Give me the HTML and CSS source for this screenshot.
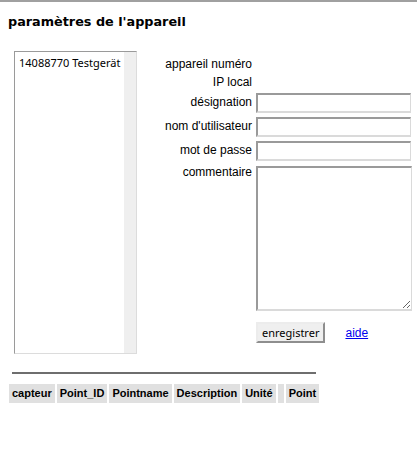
FILE: index.html
```html
<!DOCTYPE html>
<html lang="fr">
<head>
<meta charset="utf-8">
<title>paramètres de l'appareil</title>
<link rel="stylesheet" href="styles.css">
</head>
<body>
<div class="topline"></div>
<h1 class="title">paramètres de l'appareil</h1>
<div class="main">
  <div class="devices">
    <div class="device-list">
      <div class="device">14088770 Testgerät</div>
    </div>
    <div class="scrolltrack"></div>
  </div>
  <form class="settings">
    <label class="lbl lbl-text">appareil numéro</label><span class="val"></span>
    <label class="lbl lbl-text">IP local</label><span class="val"></span>
    <label class="lbl lbl-field" for="designation">désignation</label><input class="field" id="designation" type="text">
    <label class="lbl lbl-field" for="user">nom d'utilisateur</label><input class="field" id="user" type="text">
    <label class="lbl lbl-field" for="pass">mot de passe</label><input class="field" id="pass" type="password">
    <label class="lbl lbl-area" for="comment">commentaire</label><textarea class="area" id="comment"></textarea>
    <span></span>
    <div class="actions">
      <button type="button" class="btn">enregistrer</button>
      <a href="#" class="help">aide</a>
    </div>
  </form>
</div>
<div class="sep"></div>
<div class="points-head">
  <span class="th">capteur</span>
  <span class="th">Point_ID</span>
  <span class="th">Pointname</span>
  <span class="th">Description</span>
  <span class="th">Unité</span>
  <span class="th"></span>
  <span class="th">Point</span>
</div>
</body>
</html>
```
FILE: styles.css
```css
html, body {
  margin: 0;
  background: #fff;
}
body {
  font-family: "Liberation Sans", Arial, sans-serif;
  font-size: 12px;
  color: #000;
}
.topline {
  height: 2px;
  background: #a0a0a0;
}
.title {
  margin: 0;
  padding: 12px 8px 0;
  font-family: "DejaVu Sans", sans-serif;
  font-weight: bold;
  font-size: 12.8px;
  line-height: 15px;
}
.main {
  display: flex;
  align-items: flex-start;
  margin-top: 22px;
  padding-left: 14px;
}
.devices {
  width: 123px;
  height: 303px;
  box-sizing: border-box;
  border: 1px solid;
  border-color: #9a9a9a #dcdcdc #dcdcdc #9a9a9a;
  display: flex;
}
.device-list {
  flex: 1;
  padding: 3px 4px;
  font-family: "Noto Sans", "Open Sans", sans-serif;
  font-size: 11px;
  line-height: 15px;
  white-space: nowrap;
  overflow: hidden;
}
.scrolltrack {
  width: 12px;
  background: #efefef;
}
.settings {
  margin: 6px 0 0 23px;
  display: grid;
  grid-template-columns: 92px 156px;
  column-gap: 4px;
  row-gap: 4px;
}
.lbl {
  text-align: right;
  line-height: 14px;
  white-space: nowrap;
}
.lbl-field {
  padding-top: 2px;
}
.field {
  box-sizing: border-box;
  width: 155px;
  height: 20px;
  margin: 0;
  padding: 1px 2px;
  border-style: solid;
  border-width: 2px 1px 2px 2px;
  border-color: #9a9a9a #dadada #dadada #9a9a9a;
  background: #fff;
  font-family: "Liberation Sans", Arial, sans-serif;
  font-size: 12px;
  outline: none;
}
.area {
  box-sizing: border-box;
  width: 156px;
  height: 145px;
  margin: 1px 0 0;
  padding: 2px;
  border-style: solid;
  border-width: 2px 1px 2px 2px;
  border-color: #9a9a9a #dadada #dadada #9a9a9a;
  background: #fff;
  font-family: "Liberation Sans", Arial, sans-serif;
  font-size: 12px;
  display: block;
}
.actions {
  display: flex;
  align-items: baseline;
  gap: 20px;
  margin-top: 7px;
}
.btn {
  box-sizing: border-box;
  height: 21px;
  padding: 1px 4px;
  margin: 0;
  border: 2px solid;
  border-color: #ececec #8e8e8e #8e8e8e #ececec;
  background: #efefef;
  color: #000;
  font-family: "Noto Sans", "Open Sans", sans-serif;
  font-size: 11px;
  line-height: 15px;
}
.help {
  color: #0000ee;
  text-decoration: underline;
  font-size: 12px;
}
.sep {
  width: 304px;
  height: 2px;
  margin: 18px 0 0 12px;
  background: #6e6e6e;
}
.points-head {
  display: flex;
  gap: 2px;
  margin: 10px 0 0 9px;
}
.th {
  display: block;
  min-width: 0;
  padding: 3px 3px;
  background: #e0e0e0;
  font-weight: bold;
  font-size: 11px;
  line-height: 13px;
  height: 13px;
}
```
